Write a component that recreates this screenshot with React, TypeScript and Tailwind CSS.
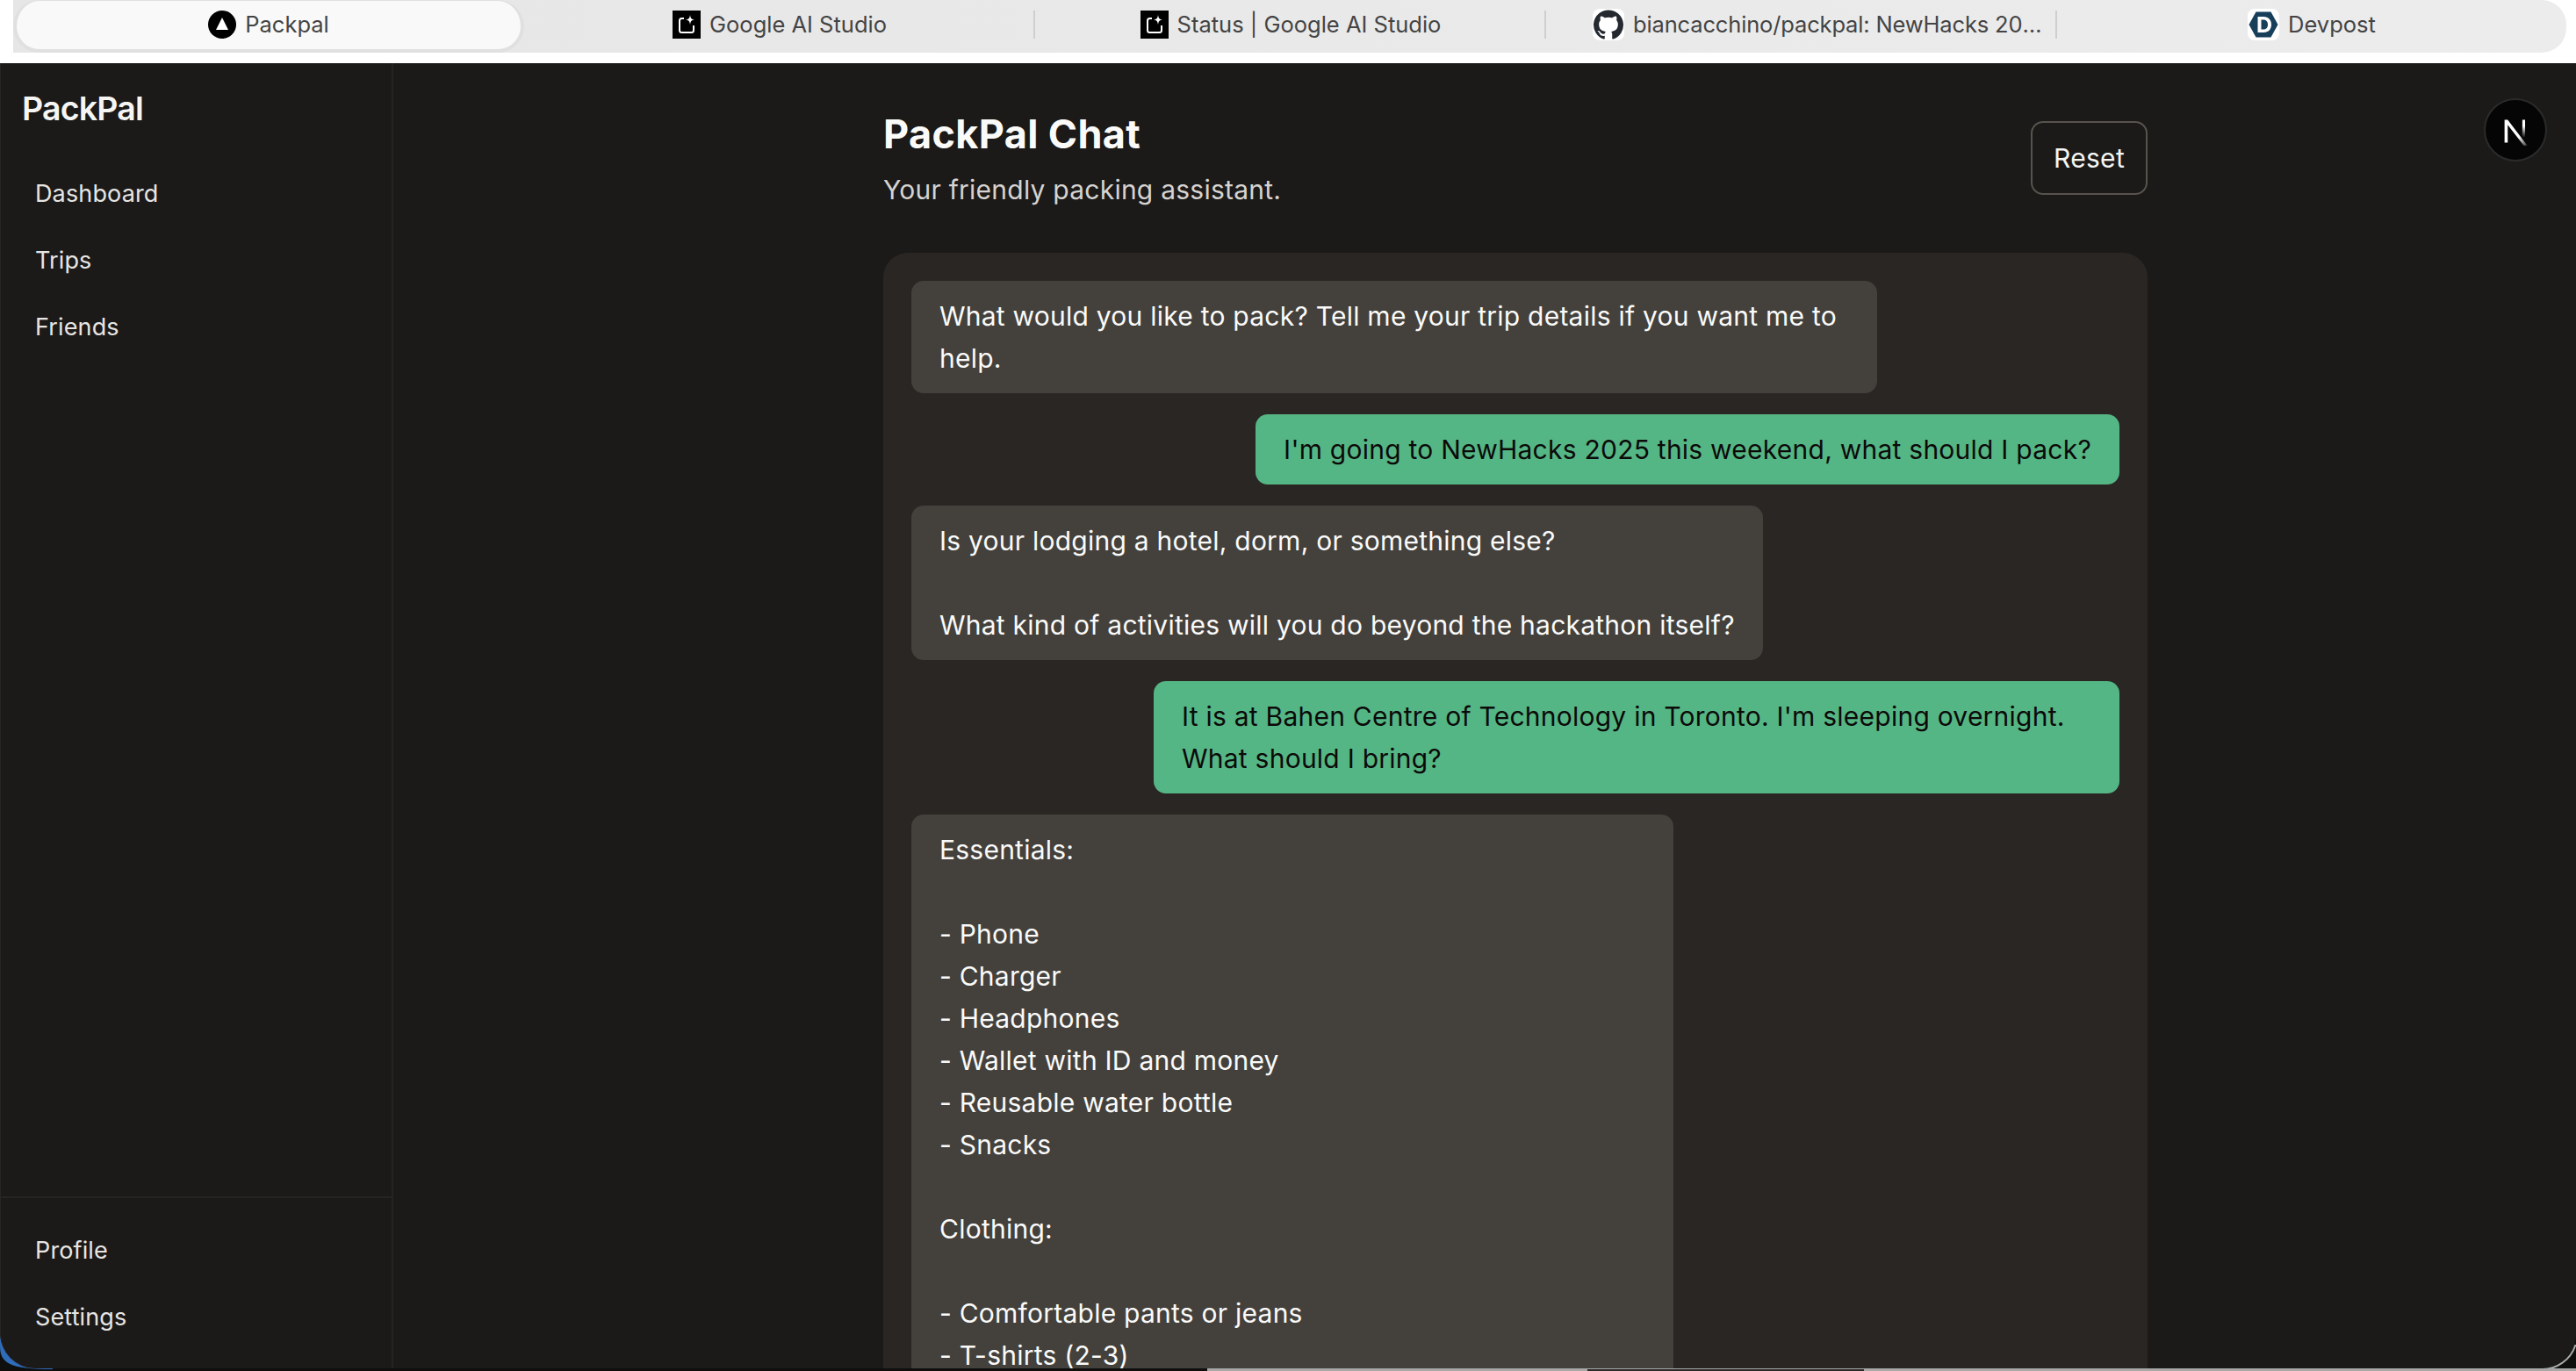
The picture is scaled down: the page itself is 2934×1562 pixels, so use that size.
const tabs = [
  { label: 'Packpal', icon: 'triangle', active: true },
  { label: 'Google AI Studio', icon: 'studio' },
  { label: 'Status | Google AI Studio', icon: 'studio' },
  { label: 'biancacchino/packpal: NewHacks 2025 project', icon: 'github' },
  { label: 'Devpost', icon: 'devpost' },
];

const messages = [
  { id: 1, mine: false, width: 'max-w-[1100px]', text: 'What would you like to pack? Tell me your trip details if you want me to help.' },
  { id: 2, mine: true, width: 'max-w-[1100px]', text: "I'm going to NewHacks 2025 this weekend, what should I pack?" },
  { id: 3, mine: false, width: 'max-w-[1100px]', text: 'Is your lodging a hotel, dorm, or something else?\n\nWhat kind of activities will you do beyond the hackathon itself?' },
  { id: 4, mine: true, width: 'max-w-[1100px]', text: "It is at Bahen Centre of Technology in Toronto. I'm sleeping overnight. What should I bring?" },
  {
    id: 5,
    mine: false,
    width: 'w-[868px]',
    text: 'Essentials:\n\n- Phone\n- Charger\n- Headphones\n- Wallet with ID and money\n- Reusable water bottle\n- Snacks\n\nClothing:\n\n- Comfortable pants or jeans\n- T-shirts (2-3)',
  },
];

const TabIcon = ({ icon }: { icon: string }) => {
  if (icon === 'triangle') {
    return (
      <svg viewBox="0 0 32 32" className="h-8 w-8 shrink-0">
        <circle cx="16" cy="16" r="16" fill="#000" />
        <path d="M16 8 L23 22 L9 22 Z" fill="#fff" />
      </svg>
    );
  }
  if (icon === 'studio') {
    return (
      <svg viewBox="0 0 32 32" className="h-8 w-8 shrink-0">
        <rect width="32" height="32" fill="#000" />
        <path d="M13 9 H10.5 A2.5 2.5 0 0 0 8 11.5 V22.5 A2.5 2.5 0 0 0 10.5 25 H21.5 A2.5 2.5 0 0 0 24 22.5 V17" fill="none" stroke="#fff" strokeWidth="2" />
        <path d="M20 5 C20.6 9 21.4 9.8 25 10.5 C21.4 11.2 20.6 12 20 16 C19.4 12 18.6 11.2 15 10.5 C18.6 9.8 19.4 9 20 5 Z" fill="#fff" />
      </svg>
    );
  }
  if (icon === 'github') {
    return (
      <svg viewBox="0 0 36 36" className="h-9 w-9 shrink-0">
        <rect width="36" height="36" rx="8" fill="#fff" />
        <g transform="translate(1 1) scale(1.4167)">
          <path
            fill="#24292f"
            d="M12 .3a12 12 0 0 0-3.8 23.38c.6.11.82-.26.82-.58v-2.03c-3.34.73-4.04-1.61-4.04-1.61-.55-1.39-1.34-1.76-1.34-1.76-1.08-.74.09-.73.09-.73 1.2.09 1.83 1.24 1.83 1.24 1.07 1.84 2.81 1.31 3.5 1 .1-.78.42-1.31.76-1.61-2.67-.3-5.47-1.33-5.47-5.93 0-1.31.47-2.38 1.24-3.22-.13-.3-.54-1.52.11-3.18 0 0 1.01-.32 3.3 1.23a11.5 11.5 0 0 1 6 0c2.29-1.55 3.3-1.23 3.3-1.23.65 1.66.24 2.88.12 3.18.77.84 1.23 1.91 1.23 3.22 0 4.61-2.8 5.62-5.48 5.92.43.37.81 1.1.81 2.22v3.29c0 .32.22.7.83.58A12 12 0 0 0 12 .3Z"
          />
        </g>
      </svg>
    );
  }
  return (
    <svg viewBox="0 0 36 36" className="h-9 w-9 shrink-0">
      <rect width="36" height="36" rx="8" fill="#fff" />
      <path d="M9.5 3.5 H26.5 L34.5 18 L26.5 32.5 H9.5 L1.5 18 Z" fill="#173f5a" />
      <path d="M11.5 9 H18 C24 9 27 13 27 18 C27 23 24 27 18 27 H11.5 Z" fill="#fff" />
      <path d="M15.5 12.5 H18 C21.5 12.5 23 15 23 18 C23 21 21.5 23.5 18 23.5 H15.5 Z" fill="#173f5a" />
    </svg>
  );
};

const NavLink = ({ label }: { label: string }) => (
  <a className="block px-[39px] py-[14px] text-[27px] leading-[48px] tracking-[0.005em] text-[#e7e5e4]">{label}</a>
);

const App = () => {
  return (
    <div className="relative flex h-screen w-full flex-col overflow-hidden bg-[#0f0f0e] font-['Inter',sans-serif]">
      {/* edge of the desktop showing past the window corners */}
      <svg viewBox="0 0 70 43" className="absolute bottom-0 left-0 h-[43px] w-[70px]">
        <path d="M0 14 C0 34 10 41 60 41 L60 0 L0 0 Z" fill="#2f6cbb" />
      </svg>
      <div className="absolute bottom-0 left-[1375px] right-0 h-[3px] bg-[#a8a8a8]" />
      <div className="absolute bottom-0 left-[1808px] h-[2px] w-[315px] bg-[#2a2a2a]" />

      {/* browser tabs */}
      <div className="relative h-[72px] shrink-0 bg-white pl-[15px] pr-[11px]">
        <div className="grid h-[60px] grid-cols-[582px_582px_582px_582px_1fr] rounded-r-[28px] bg-gradient-to-r from-[#e6e6e6] to-[#ececec]">
          {tabs.map((tab, i) => (
            <div key={tab.label} className={`relative flex items-center pb-[4px] ${tab.icon === 'github' ? 'justify-start pl-[53px]' : 'justify-center'}`}>
              {tab.active && <div className="absolute inset-y-0 left-0 right-0 rounded-[30px] border-[4px] border-t-[1px] border-[#e0e0e0] bg-[#f9f9f9]" />}
              <div className="relative flex h-9 items-center gap-[10px]">
                <TabIcon icon={tab.icon} />
                <span className={`truncate text-[25.5px] text-[#444444] ${tab.icon === 'github' ? 'max-w-[468px] tracking-[-0.006em]' : ''}`}>{tab.label}</span>
              </div>
              {(i === 1 || i === 2 || i === 3) && <div className="absolute right-0 top-[12px] h-[32px] w-[2px] bg-[#cfcfcf]" />}
            </div>
          ))}
        </div>
      </div>

      {/* app window */}
      <div className="relative flex h-[1487px] shrink-0 overflow-hidden rounded-b-[40px] border-l border-[#292524] bg-[#1b1a18]">
        <aside className="flex w-[447px] shrink-0 flex-col border-r-2 border-[#262422]">
          <div className="px-[24px] pt-[28px] text-[37.5px] font-semibold leading-[48px] tracking-[-0.022em] text-[#f5f5f4]">PackPal</div>
          <nav className="mt-[35px] flex flex-1 flex-col">
            <NavLink label="Dashboard" />
            <NavLink label="Trips" />
            <NavLink label="Friends" />
          </nav>
          <div className="border-t-2 border-[#262422] pb-[20px] pt-[22px]">
            <NavLink label="Profile" />
            <NavLink label="Settings" />
          </div>
        </aside>

        <main className="min-w-0 flex-1 overflow-hidden pl-[558px] pt-[51px]">
          <div className="w-[1440px]">
            <header className="mb-[48px] flex items-center justify-between">
              <div>
                <h1 className="text-[45px] font-bold leading-[60px] tracking-[0.008em] text-[#fafaf9]">PackPal Chat</h1>
                <p className="mt-[9px] text-[30px] leading-[48px] tracking-[0.008em] text-[#d6d3d1]">Your friendly packing assistant.</p>
              </div>
              <button className="mb-[4px] rounded-[14px] border-2 border-[#57534e] px-[24px] py-[16px] text-[30px] leading-[48px] tracking-[0.01em] text-[#f5f5f4]">Reset</button>
            </header>

            <div className="flex flex-col gap-[24px] rounded-[28px] bg-[#292624] p-[32px]">
              {messages.map((m) => (
                <div key={m.id} className={`flex ${m.mine ? 'justify-end' : 'justify-start'}`}>
                  <div className={`${m.width} whitespace-pre-line rounded-[14px] px-[32px] py-[16px] text-[30px] leading-[48px] tracking-[0.008em] ${m.mine ? 'bg-[#55b685] text-[#0c0a09]' : 'bg-[#44413c] text-[#fafaf9]'}`}>
                    {m.text}
                  </div>
                </div>
              ))}
            </div>
          </div>
        </main>
      </div>

      {/* dev badge */}
      <div className="absolute left-[2829px] top-[112px] flex h-[72px] w-[72px] items-center justify-center rounded-full border-2 border-[#2b2b2b] bg-[#050505]">
        <svg viewBox="0 0 32 32" className="mt-[3px] h-[36px] w-[36px]">
          <defs>
            <linearGradient id="nextFade" x1="0" y1="0" x2="0" y2="1">
              <stop offset="0.35" stopColor="#fff" />
              <stop offset="1" stopColor="#fff" stopOpacity="0" />
            </linearGradient>
            <linearGradient id="nextDiag" x1="0.3" y1="0.3" x2="1" y2="1">
              <stop offset="0.5" stopColor="#fff" />
              <stop offset="1" stopColor="#fff" stopOpacity="0.2" />
            </linearGradient>
          </defs>
          <path d="M5 4 H8.2 L28 30 H24.4 L8.2 9 V27 H5 Z" fill="url(#nextDiag)" />
          <rect x="23" y="4" width="2.8" height="18" fill="url(#nextFade)" />
        </svg>
      </div>

      <svg viewBox="0 0 70 43" className="absolute bottom-0 right-0 h-[43px] w-[70px]">
        <path d="M0 41 H30 A40 40 0 0 0 69.5 13" fill="none" stroke="#a8a8a8" strokeWidth="2" />
      </svg>
    </div>
  );
};

export default App;
